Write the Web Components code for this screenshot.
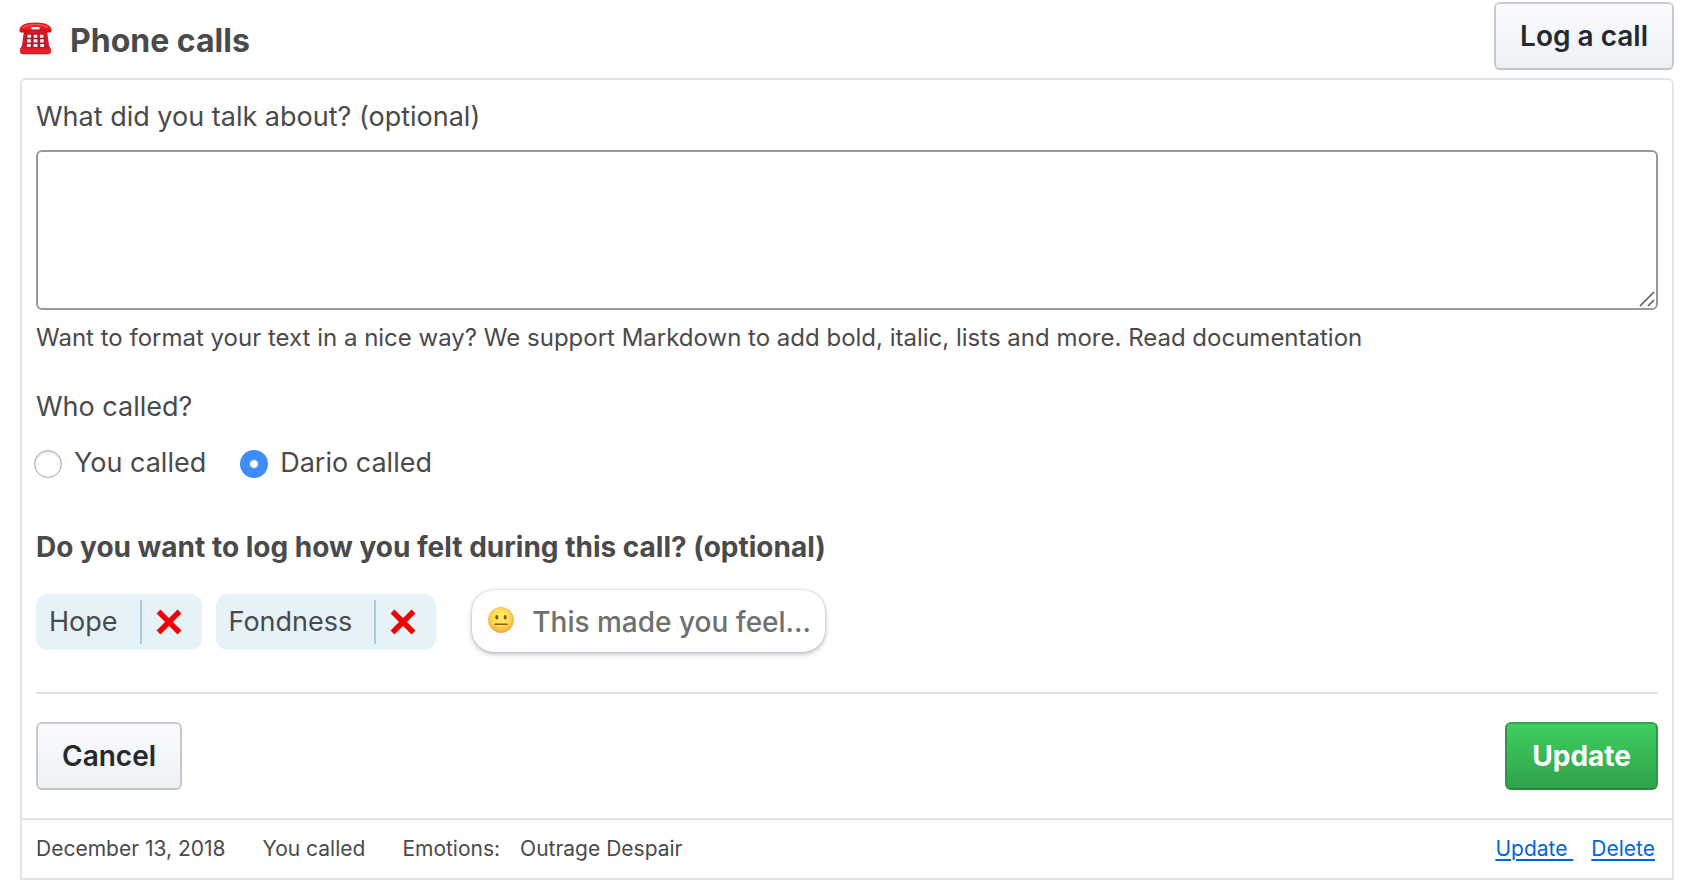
<!doctype html>
<html lang="en">
<head>
<meta charset="utf-8">
<title>Phone calls</title>
<style>
  body {
    margin: 0;
    background: #fff;
    color: #4a4a4a;
    font: 400 27px/36px Inter, "Liberation Sans", sans-serif;
  }
</style>
</head>
<body>
<phone-calls></phone-calls>

<template id="t-phone-calls">
  <style>
    :host { display: block; padding: 2px 12px 12px 20px; }
    header { display: flex; align-items: center; margin-bottom: 8px; }
    svg { width: 33px; height: 33px; flex: none; margin: 4px 18px 0 -1px; }
    h3 { margin: 0; padding-top: 10px; flex: 1; font-size: 32px; line-height: 40px; font-weight: 700; }
    section { border: 2px solid #e4e4e4; border-radius: 6px 6px 0 0; }
    call-entry { border-top: 2px solid #e4e4e4; }
  </style>
  <header>
    <svg viewBox="0 0 33 33" aria-hidden="true">
      <defs>
        <linearGradient id="body" x1="0" y1="0" x2="0" y2="1"><stop offset="0" stop-color="#dc1c24"/><stop offset="1" stop-color="#c41a27"/></linearGradient>
        <linearGradient id="hand" x1="0" y1="0" x2="0" y2="1"><stop offset="0" stop-color="#c91820"/><stop offset=".35" stop-color="#f5262a"/><stop offset="1" stop-color="#c50f18"/></linearGradient>
      </defs>
      <path d="M5 8h23l2 15.500 1.700 3V30.500q0 1.200-1 1.200H2.300q-1 0-1-1.200v-4l1.700-3z" fill="url(#body)"/>
      <path d="M1.300 26.500h30.400V30q0 1.200-1 1.200H2.300q-1 0-1-1.200z" fill="#ee1a24"/>
      <path d="M3.500 31.800h26" stroke="#8a2a2f" stroke-width="1"/>
      <path d="M10 4h13v5H10z" fill="#c41622"/>
      <path d="M.4 8Q1 .7 16.500.6 32 .7 32.600 8q0 2.500-1.500 2.500h-6Q23 10.500 22 8l-1.500-3h-8L11 8q-1 2.500-3 2.500H2Q.4 10.500.4 8z" fill="url(#hand)"/>
      <path d="M12.500 5h8v2.400h-8z" fill="#fff"/>
      <path d="M4 5.500Q9 2.400 16.500 2.200t12.500 3.300" fill="none" stroke="#ff6664" stroke-width=".9"/>
      <path d="M7.300 11.500h18.400l1.300 14H6z" fill="#b81726"/>
      <g fill="#edf3f4">
        <path d="M8.500 12.700h3.600v3H8.500zM14.700 12.700h3.600v3h-3.600zM20.900 12.700h3.600v3h-3.600zM8.200 17.200h3.700v3.200H8.200zM14.600 17.200h3.800v3.200h-3.800zM21.100 17.200h3.700v3.200h-3.700zM7.900 22h3.900v3H7.900zM14.500 22h4v3h-4zM21.200 22h3.900v3h-3.900z"/>
      </g>
    </svg>
    <h3>Phone calls</h3>
    <push-button>Log a call</push-button>
  </header>
  <section>
    <call-form></call-form>
    <call-entry>
      <span slot="date">December 13, 2018</span>
      <span slot="caller">You called</span>
      <span slot="emotions">Outrage Despair</span>
    </call-entry>
  </section>
</template>

<template id="t-push-button">
  <style>
    :host { display: block; }
    button {
      box-sizing: border-box; height: 68px; padding: 0 24px; margin: 0;
      border: 2px solid; border-color: #cccdd0 #c5c9ce #c0c4c9; border-radius: 6px;
      background: linear-gradient(#fafbfd, #edf1f5);
      color: #24292e; font: 600 28px/36px Inter, "Liberation Sans", sans-serif;
      white-space: nowrap; cursor: pointer;
    }
    :host([primary]) button {
      color: #fff; font-weight: 700; padding: 0 25px;
      border-color: #35a44f #2f9748 #2b8841;
      background: linear-gradient(#3fcf60, #30a24b);
    }
  </style>
  <button type="button"><slot></slot></button>
</template>

<template id="t-emotion-chip">
  <style>
    :host {
      display: flex; align-items: center; box-sizing: border-box; height: 56px;
      padding: 0 20px 0 13px; border-radius: 12px; background: #e5f2f8;
    }
    button {
      display: flex; align-items: center; height: 44px; padding: 0 0 0 14px;
      margin: 0 0 0 22px; border: 0; border-left: 2px solid #a6cbd9;
      background: none; cursor: pointer;
    }
    svg { width: 26px; height: 26px; }
  </style>
  <slot></slot>
  <button type="button" aria-label="Remove">
    <svg viewBox="0 0 26 26" aria-hidden="true"><path d="M2.500 2.500l21 21M23.500 2.500l-21 21" stroke="#f30000" stroke-width="5.400"/></svg>
  </button>
</template>

<template id="t-feeling-picker">
  <style>
    :host { display: block; }
    button {
      display: flex; align-items: center; box-sizing: border-box; height: 62px;
      padding: 2px 14px 0 16px; margin: 0; border: 0; border-radius: 22px; background: #fff;
      box-shadow: 0 0 2px rgba(60, 60, 90, .25), 0 2px 5px rgba(60, 60, 90, .35);
      color: #707070; font: 500 28px/36px Inter, "Liberation Sans", sans-serif;
      white-space: nowrap; cursor: pointer;
    }
    svg { width: 26px; height: 26px; margin: 0 18px 4px 0; }
  </style>
  <button type="button">
    <svg viewBox="0 0 26 26" aria-hidden="true">
      <defs>
        <radialGradient id="face" cx=".5" cy=".38" r=".62"><stop offset="0" stop-color="#fff06a"/><stop offset=".55" stop-color="#fddc50"/><stop offset="1" stop-color="#f4a93a"/></radialGradient>
      </defs>
      <circle cx="13" cy="13" r="12.600" fill="url(#face)" stroke="#eda63c" stroke-width=".6"/>
      <ellipse cx="8.800" cy="10.300" rx="1.500" ry="2.300" fill="#85551c"/>
      <ellipse cx="17.200" cy="10.300" rx="1.500" ry="2.300" fill="#85551c"/>
      <path d="M7 17.200h12" stroke="#8a5a20" stroke-width="1.500" stroke-linecap="round"/>
    </svg>
    <slot></slot>
  </button>
</template>

<template id="t-call-form">
  <style>
    :host { display: block; padding: 19px 14px 28px; }
    label.top { display: block; margin-bottom: 15px; }
    textarea {
      display: block; box-sizing: border-box; width: 100%; height: 160px; margin: 0;
      padding: 10px; border: 2px solid #999; border-radius: 6px; background: #fff;
      color: inherit; font: inherit; resize: none;
    }
    .field { position: relative; }
    .grip { position: absolute; right: 3px; bottom: 3px; width: 16px; height: 16px; pointer-events: none; }
    p { margin: 13px 0 36px; font-size: 24px; line-height: 30px; }
    p a { color: inherit; text-decoration: none; }
    fieldset { border: 0; margin: 0 0 48px; padding: 0; min-width: 0; }
    legend { padding: 0; margin-bottom: 20px; }
    .choices { display: flex; gap: 34px; margin-left: -2px; }
    .choices label { display: flex; align-items: center; gap: 12px; }
    input {
      appearance: none; flex: none; box-sizing: border-box; width: 28px; height: 28px; margin: 2px 0 0;
      border: 1px solid #a9a9a9; border-radius: 50%;
      background: #fff; box-shadow: inset 0 1px 3px rgba(0, 0, 0, .2);
    }
    input:checked { border: 0; box-shadow: none; background: radial-gradient(circle, #fff 3px, #3f8bfb 5px); }
    h4 { margin: 0 0 25px; font-size: 28px; line-height: 36px; font-weight: 700; }
    .feelings { display: flex; align-items: center; flex-wrap: wrap; }
    .chips { display: flex; gap: 14px; padding-top: 2px; margin-right: 36px; }
    .actions {
      display: flex; justify-content: space-between;
      margin-top: 40px; padding-top: 28px; border-top: 2px solid #dae0e6;
    }
  </style>
  <label class="top" for="topic">What did you talk about? (optional)</label>
  <div class="field">
    <textarea id="topic"></textarea>
    <svg class="grip" viewBox="0 0 16 16" aria-hidden="true"><path d="M1 15L15 1M9 15l6-6" stroke="#555" stroke-width="1.500"/></svg>
  </div>
  <p>Want to format your text in a nice way? We support Markdown to add bold, italic, lists and more. <a href="#markdown">Read documentation</a></p>
  <fieldset>
    <legend>Who called?</legend>
    <div class="choices">
      <label><input type="radio" name="caller" value="you">You called</label>
      <label><input type="radio" name="caller" value="contact" checked>Dario called</label>
    </div>
  </fieldset>
  <h4>Do you want to log how you felt during this call? (optional)</h4>
  <div class="feelings">
    <div class="chips">
      <emotion-chip>Hope</emotion-chip>
      <emotion-chip>Fondness</emotion-chip>
    </div>
    <feeling-picker>This made you feel...</feeling-picker>
  </div>
  <div class="actions">
    <push-button>Cancel</push-button>
    <push-button primary>Update</push-button>
  </div>
</template>

<template id="t-call-entry">
  <style>
    :host { display: flex; align-items: center; padding: 14px 17px 14px 14px; font-size: 21px; line-height: 30px; }
    .caller { margin: 0 37px; }
    .label { margin-right: 20px; }
    nav { display: flex; gap: 18px; margin-left: auto; }
    a { color: #0366d6; text-decoration: underline; text-decoration-thickness: 2px; text-underline-offset: 3px; white-space: pre; }
  </style>
  <slot name="date"></slot>
  <span class="caller"><slot name="caller"></slot></span>
  <span class="label">Emotions:</span>
  <slot name="emotions"></slot>
  <nav><a href="#update">Update </a><a href="#delete">Delete</a></nav>
</template>

<script>
  class TemplateElement extends HTMLElement {
    constructor() {
      super();
      const template = document.getElementById('t-' + this.localName);
      this.attachShadow({ mode: 'open' }).append(template.content.cloneNode(true));
    }
  }
  for (const name of ['push-button', 'emotion-chip', 'feeling-picker', 'call-form', 'call-entry', 'phone-calls']) {
    customElements.define(name, class extends TemplateElement {});
  }
</script>
</body>
</html>
